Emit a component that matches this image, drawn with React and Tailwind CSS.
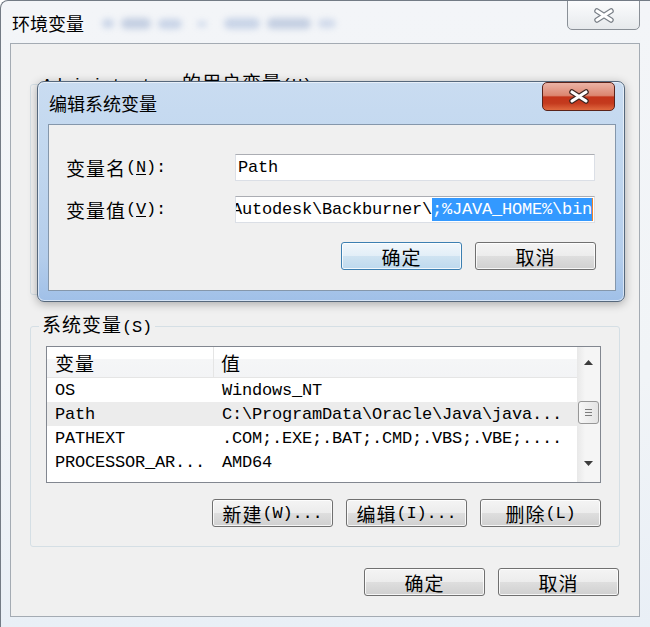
const MONO = "font-['Liberation_Mono',monospace] text-[17px] tracking-[-0.2px]";
const CJK = "font-['Noto_Sans_CJK_SC',sans-serif] text-[19px] tracking-[1px]";
const TITLE = "font-['Noto_Sans_CJK_SC',sans-serif] text-[18px] leading-[18px]";

const rows = [
  ["OS", "Windows_NT"],
  ["Path", "C:\\ProgramData\\Oracle\\Java\\java..."],
  ["PATHEXT", ".COM;.EXE;.BAT;.CMD;.VBS;.VBE;...."],
  ["PROCESSOR_AR...", "AMD64"],
];

function Z({ children }) {
  return <span className={CJK}>{children}</span>;
}

function Btn({ children, focus }) {
  return (
    <div
      className={
        focus
          ? "w-[121px] h-[28px] flex items-center justify-center rounded-[3px] border border-[#3c7fb1] bg-[linear-gradient(to_bottom,#f1f7fb_0%,#e2eef7_50%,#cfe3f1_51%,#bdd9ee_100%)] shadow-[inset_0_0_0_1px_rgba(255,255,255,0.8)] leading-none text-black"
          : "w-[121px] h-[28px] flex items-center justify-center rounded-[3px] border border-[#707070] bg-[linear-gradient(to_bottom,#f4f4f4_0%,#ececec_50%,#dedede_51%,#d0d0d0_100%)] shadow-[inset_0_0_0_1px_rgba(255,255,255,0.8)] leading-none text-black"
      }
    >
      {children}
    </div>
  );
}

function CloseX({ edge, fill }) {
  return (
    <svg width="22" height="15" viewBox="0 0 22 15">
      <path d="M4 3 L18 12 M18 3 L4 12" stroke={edge} strokeWidth="5.5" strokeLinecap="round" />
      <path d="M4 3 L18 12 M18 3 L4 12" stroke={fill} strokeWidth="3.2" strokeLinecap="round" />
    </svg>
  );
}

function Arrow({ down }) {
  return (
    <svg width="9" height="5" viewBox="0 0 9 5">
      <path d={down ? "M0 0 L9 0 L4.5 5Z" : "M0 5 L4.5 0 L9 5Z"} fill="#3c3c3c" />
    </svg>
  );
}

function EditDialog() {
  return (
    <div className="absolute left-[36px] top-[80px] w-[588px] h-[221px] flex flex-col rounded-[7px] border border-[#56687c] bg-[linear-gradient(to_bottom,#c9dcf1_0%,#c0d6ee_40%,#b4cdeb_80%,#a0c0e8_100%)] shadow-[0_2px_10px_rgba(0,0,0,0.3),inset_0_0_0_1px_rgba(255,255,255,0.55)]">
      {/* title bar */}
      <div className="h-[42px] flex items-start justify-between">
        <span className={`${TITLE} pl-[11px] pt-[12px] text-black`}>编辑系统变量</span>
        <div className="mr-[9px] w-[73px] h-[29px] flex items-center justify-center rounded-[5px] border border-[#5a231a] bg-[linear-gradient(to_bottom,#eab3a6_0%,#dc8670_46%,#c4351b_52%,#c43a1e_75%,#e0693f_100%)]">
          <CloseX edge="#3d2520" fill="#ffffff" />
        </div>
      </div>

      {/* client */}
      <div className="ml-[10px] mr-[8px] h-[167px] border border-[#8597ab] bg-[#f0f0f0] flex flex-col pl-[17px] pr-[19px] pt-[29px] leading-none text-black">
        <div className="flex items-center">
          <div className="w-[169px] flex items-center">
            <Z>变量名</Z>
            <span className={MONO}>
              (<span className="underline underline-offset-2">N</span>):
            </span>
          </div>
          <div className="w-[360px] h-[27px] border border-[#dbdfe6] border-t-[#abadb3] bg-white flex items-center pl-[2px]">
            <span className={MONO}>Path</span>
          </div>
        </div>

        <div className="flex items-center mt-[15px]">
          <div className="w-[169px] flex items-center">
            <Z>变量值</Z>
            <span className={MONO}>
              (<span className="underline underline-offset-2">V</span>):
            </span>
          </div>
          <div className="w-[360px] h-[27px] border border-[#dbdfe6] border-t-[#abadb3] bg-white flex justify-end items-stretch overflow-hidden py-[1px] pr-[1px]">
            <span className={`${MONO} whitespace-pre shrink-0 flex items-center`}>Autodesk\Backburner\</span>
            <span className={`${MONO} whitespace-pre shrink-0 flex items-center bg-[#3399ff] text-white`}>
              ;%JAVA_HOME%\bin
            </span>
            <span className="w-[1px] shrink-0 bg-[#f0822a]" />
          </div>
        </div>

        <div className="flex justify-end gap-[13px] mt-[19px]">
          <Btn focus>
            <Z>确定</Z>
          </Btn>
          <Btn>
            <Z>取消</Z>
          </Btn>
        </div>
      </div>
    </div>
  );
}

export default function App() {
  return (
    <div className="relative w-[650px] h-[627px] overflow-hidden flex flex-col border-l border-t border-[#737b85] rounded-tl-[8px] bg-[linear-gradient(to_bottom,#f3f5f8_0%,#f1f4f7_60%,#e9eff6_100%)] text-black">
      {/* outer title bar */}
      <div className="h-[42px] flex items-start">
        <span className={`${TITLE} pl-[11px] pt-[13px] [text-shadow:0_0_8px_#ffffff]`}>环境变量</span>
        <div className="flex-1 flex items-center gap-[7px] pl-[18px] pt-[17px] opacity-40 blur-[3px]">
          <div className="w-[12px] h-[9px] rounded-full bg-[#8aa3cf]" />
          <div className="w-[30px] h-[11px] rounded-full bg-[#7f97c2]" />
          <div className="w-[24px] h-[10px] rounded-full bg-[#8aa3cf]" />
          <div className="w-[10px] h-[6px] rounded-full bg-[#9db2d8] ml-[8px]" />
          <div className="w-[36px] h-[11px] rounded-full bg-[#8aa3cf] ml-[10px]" />
          <div className="w-[44px] h-[11px] rounded-full bg-[#7f97c2]" />
          <div className="w-[18px] h-[9px] rounded-full bg-[#9db2d8]" />
        </div>
        <div className="mr-[10px] w-[73px] h-[30px] -mt-[1px] flex items-center justify-center rounded-b-[5px] border border-[#8a9097] bg-[linear-gradient(to_bottom,#fbfcfd_0%,#f1f3f5_50%,#e6e9ec_100%)]">
          <CloseX edge="#7a8088" fill="#ffffff" />
        </div>
      </div>

      {/* outer client */}
      <div className="ml-[9px] w-[630px] h-[574px] border border-[#a4abb3] bg-[#f0f0f0] flex flex-col leading-none">
        <fieldset className="mt-[28px] mx-[19px] h-[223px] border border-[#d5dfe5] rounded-[3px] px-[8px]">
          <legend className="px-[3px] leading-[20px]">
            <span className={MONO}>Administrator </span>
            <Z>的用户变量</Z>
            <span className={MONO}>(U)</span>
          </legend>
        </fieldset>

        <fieldset className="mt-[19px] mx-[19px] border border-[#d5dfe5] rounded-[3px] px-[8px] pt-[8px] pb-[19px]">
          <legend className="px-[3px] leading-[20px]">
            <Z>系统变量</Z>
            <span className={MONO}>(S)</span>
          </legend>

          <div className="ml-[7px] mr-[10px] h-[137px] border border-[#828790] bg-white flex">
            <div className="flex-1 flex flex-col">
              <div className="h-[31px] flex border-b border-[#e5e5e5] bg-[linear-gradient(to_bottom,#ffffff_0%,#ffffff_40%,#f5f6f7_41%,#f3f4f6_100%)]">
                <div className="w-[167px] border-r border-[#e5e5e5] pl-[8px] flex items-center">
                  <Z>变量</Z>
                </div>
                <div className="pl-[7px] flex items-center">
                  <Z>值</Z>
                </div>
              </div>
              {rows.map(([k, v], i) => (
                <div
                  key={k}
                  className={i === 1 ? "h-[24px] flex items-center bg-[#ececec]" : "h-[24px] flex items-center"}
                >
                  <div className={`${MONO} w-[167px] pl-[8px] whitespace-pre`}>{k}</div>
                  <div className={`${MONO} pl-[8px] whitespace-pre`}>{v}</div>
                </div>
              ))}
            </div>

            <div className="w-[23px] flex flex-col bg-[linear-gradient(to_right,#e8e8e8,#f5f5f5_35%,#f5f5f5)]">
              <div className="h-[30px] flex items-center justify-center">
                <Arrow />
              </div>
              <div className="h-[24px]" />
              <div className="mx-[1px] h-[23px] rounded-[3px] border border-[#979797] bg-[linear-gradient(to_right,#f7f7f7,#e4e4e4)] flex flex-col items-center justify-center gap-[2px]">
                <div className="w-[7px] h-[1px] bg-[#7d7d7d]" />
                <div className="w-[7px] h-[1px] bg-[#7d7d7d]" />
                <div className="w-[7px] h-[1px] bg-[#7d7d7d]" />
              </div>
              <div className="flex-1" />
              <div className="h-[30px] flex items-start justify-center pt-[9px]">
                <Arrow down />
              </div>
            </div>
          </div>

          <div className="mt-[16px] mr-[10px] flex justify-end gap-[13px]">
            <Btn>
              <Z>新建</Z>
              <span className={MONO}>(W)...</span>
            </Btn>
            <Btn>
              <Z>编辑</Z>
              <span className={MONO}>(I)...</span>
            </Btn>
            <Btn>
              <Z>删除</Z>
              <span className={MONO}>(L)</span>
            </Btn>
          </div>
        </fieldset>

        <div className="mt-[21px] mr-[20px] flex justify-end gap-[13px]">
          <Btn>
            <Z>确定</Z>
          </Btn>
          <Btn>
            <Z>取消</Z>
          </Btn>
        </div>
      </div>

      <EditDialog />
    </div>
  );
}
